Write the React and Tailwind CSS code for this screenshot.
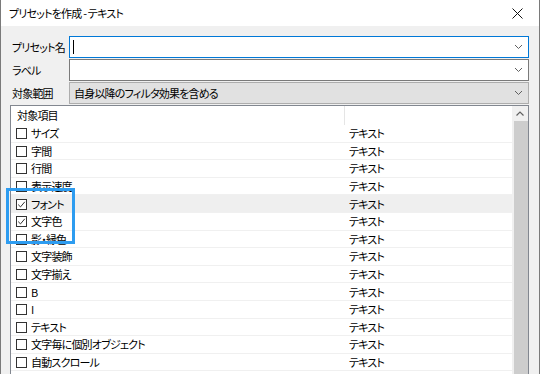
const rows = [
  { label: 'サイズ', checked: false },
  { label: '字間', checked: false },
  { label: '行間', checked: false },
  { label: '表示速度', checked: false },
  { label: 'フォント', checked: true, hover: true },
  { label: '文字色', checked: true },
  { label: '影・縁色', checked: false },
  { label: '文字装飾', checked: false },
  { label: '文字揃え', checked: false },
  { label: 'B', checked: false },
  { label: 'I', checked: false },
  { label: 'テキスト', checked: false },
  { label: '文字毎に個別オブジェクト', checked: false },
  { label: '自動スクロール', checked: false },
]

const Chevron = () => (
  <svg width="9" height="6" viewBox="0 0 9 6" className="shrink-0">
    <path d="M1 1 L4.5 4.5 L8 1" fill="none" stroke="#606060" strokeWidth="1" />
  </svg>
)

const CheckBox = ({ checked }) => (
  <span className="flex h-[11px] w-[11px] shrink-0 items-center justify-center border border-[#333] bg-white">
    {checked ? (
      <svg width="9" height="9" viewBox="0 0 9 9">
        <path d="M1.2 4.6 L3.5 6.9 L7.8 1.8" fill="none" stroke="#333" strokeWidth="1" />
      </svg>
    ) : null}
  </span>
)

function App() {
  return (
    <div
      className="relative h-[374px] w-[540px] overflow-hidden border-x border-[#7a7a7a] bg-[#f0f0f0] text-[11px] leading-none tracking-[-0.8px] text-black [font-feature-settings:'palt']"
      style={{ fontFamily: '"Noto Sans CJK JP", "Noto Sans", sans-serif' }}
    >
      {/* タイトルバー */}
      <div className="flex h-[26px] items-center justify-between bg-white pl-[8px] pr-[16px]">
        <span>プリセットを作成 - テキスト</span>
        <svg width="11" height="11" viewBox="0 0 11 11">
          <path d="M0.5 0.5 L10.5 10.5 M10.5 0.5 L0.5 10.5" stroke="#111" strokeWidth="1" />
        </svg>
      </div>

      <div className="flex flex-col pl-[9px] pr-[10px] pt-[10px]">
        <div className="flex h-[22px] items-center">
          <span className="w-[59px] pl-[2px]">プリセット名</span>
          <div className="flex h-full flex-1 items-center justify-between border border-[#0078d7] bg-white pl-[3px] pr-[5px]">
            <span className="h-[14px] w-[1px] bg-black" />
            <Chevron />
          </div>
        </div>
        <div className="mt-[1px] flex h-[22px] items-center">
          <span className="w-[59px] pl-[2px]">ラベル</span>
          <div className="flex h-full flex-1 items-center justify-end border border-[#7a7a7a] bg-white pr-[5px]">
            <Chevron />
          </div>
        </div>
        <div className="mt-[1px] flex h-[22px] items-center">
          <span className="w-[59px] pl-[2px]">対象範囲</span>
          <div className="flex h-full flex-1 items-center justify-between border border-[#adadad] bg-[#e1e1e1] pl-[4px] pr-[5px]">
            <span>自身以降のフィルタ効果を含める</span>
            <Chevron />
          </div>
        </div>

        {/* 対象項目リスト */}
        <div className="mt-[1px] flex h-[280px] border border-[#828790] bg-white">
          <div className="flex flex-1 flex-col">
            <div className="flex h-[19px] shrink-0 items-center">
              <div className="flex h-full w-[333px] items-center pl-[6px]">対象項目</div>
              <div className="h-full w-[1px] bg-[#e5e5e5]" />
            </div>
            {rows.map((row) => (
              <div
                key={row.label}
                className={`flex h-[17.6px] shrink-0 items-center border-b border-[#f0f0f0] pt-[1px] ${row.hover ? 'bg-[#efefef]' : ''}`}
              >
                <div className="flex w-[334px] items-center gap-[4px] pl-[5px]">
                  <CheckBox checked={row.checked} />
                  <span>{row.label}</span>
                </div>
                <span className="pl-[4px]">テキスト</span>
              </div>
            ))}
          </div>
          <div className="flex w-[16px] shrink-0 flex-col bg-[#f0f0f0]">
            <div className="flex h-[15px] items-center justify-center">
              <svg width="8" height="5" viewBox="0 0 8 5">
                <path d="M0.5 4.5 L4 1 L7.5 4.5" fill="none" stroke="#606060" strokeWidth="1.2" />
              </svg>
            </div>
            <div className="ml-[2px] flex-1 bg-[#cdcdcd]" />
          </div>
        </div>
      </div>

      {/* 強調枠 */}
      <div className="absolute left-[5px] top-[188px] h-[56px] w-[69px] border-[3px] border-[#2d9cf0]" />
    </div>
  )
}

export default App
